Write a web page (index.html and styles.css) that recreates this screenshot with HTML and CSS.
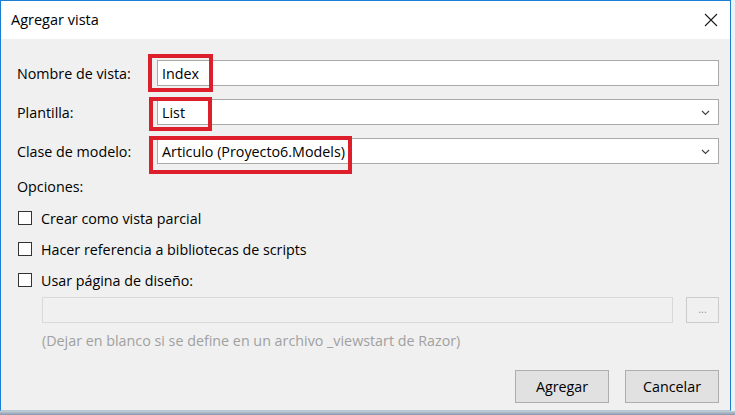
FILE: index.html
```html
<!DOCTYPE html>
<html lang="es">
<head>
<meta charset="utf-8">
<title>Agregar vista</title>
<link rel="stylesheet" href="styles.css">
</head>
<body>
<div class="screen">
  <div class="window">
    <div class="titlebar">
      <span class="title">Agregar vista</span>
      <span class="close" aria-label="Cerrar">
        <svg width="14" height="14" viewBox="0 0 14 14"><path d="M1 1 L13 13 M13 1 L1 13" stroke="#1a1a1a" stroke-width="1.1" fill="none"/></svg>
      </span>
    </div>
    <div class="body">
      <div class="field-row">
        <label class="label">Nombre de vista:</label>
        <div class="control">
          <div class="input">Index</div>
          <span class="mark mark-index"></span>
        </div>
      </div>
      <div class="field-row">
        <label class="label">Plantilla:</label>
        <div class="control">
          <div class="input select">List
            <svg class="chev" width="9" height="6" viewBox="0 0 9 6"><path d="M1 1 L4.5 4.5 L8 1" stroke="#444" stroke-width="1.2" fill="none"/></svg>
          </div>
          <span class="mark mark-list"></span>
        </div>
      </div>
      <div class="field-row">
        <label class="label">Clase de modelo:</label>
        <div class="control">
          <div class="input select">Articulo (Proyecto6.Models)
            <svg class="chev" width="9" height="6" viewBox="0 0 9 6"><path d="M1 1 L4.5 4.5 L8 1" stroke="#444" stroke-width="1.2" fill="none"/></svg>
          </div>
          <span class="mark mark-clase"></span>
        </div>
      </div>
      <div class="section">Opciones:</div>
      <div class="check-row"><span class="box"></span><span>Crear como vista parcial</span></div>
      <div class="check-row"><span class="box"></span><span>Hacer referencia a bibliotecas de scripts</span></div>
      <div class="check-row"><span class="box"></span><span>Usar página de diseño:</span></div>
      <div class="layout-row">
        <div class="input disabled"></div>
        <div class="browse">...</div>
      </div>
      <div class="hint">(Dejar en blanco si se define en un archivo _viewstart de Razor)</div>
      <div class="buttons">
        <div class="btn">Agregar</div>
        <div class="btn">Cancelar</div>
      </div>
    </div>
  </div>
  <div class="edge-right"></div>
</div>
<div class="edge-bottom"></div>
</body>
</html>
```
FILE: styles.css
```css
* { box-sizing: border-box; }
html, body { margin: 0; padding: 0; }
body {
  width: 735px;
  height: 415px;
  overflow: hidden;
  background: #dfe6ee;
  font-family: "Open Sans", "Noto Sans", sans-serif;
  font-size: 14.3px;
  color: #000;
}
.screen { display: flex; height: 411px; }
.window {
  width: 731px;
  height: 411px;
  border: 1px solid #1a7fd4;
  border-bottom-color: #b9c6d4;
  display: flex;
  flex-direction: column;
  background: #f0f0f0;
}
.edge-right { flex: 1; background: #eef2f6; }
.edge-bottom { height: 4px; background: linear-gradient(#c4cfdb, #8797aa); }
.titlebar {
  height: 38px;
  background: #fff;
  display: flex;
  align-items: center;
  justify-content: space-between;
  padding: 0 9px 0 10px;
  flex-shrink: 0;
}
.title { font-size: 14.5px; line-height: 20px; margin-top: -1px; }
.close { width: 14px; height: 14px; display: flex; margin-right: 3px; }
.body {
  flex: 1;
  padding: 21px 11px 0 16px;
  display: flex;
  flex-direction: column;
}
.field-row {
  display: flex;
  align-items: center;
  height: 26px;
  margin-bottom: 13px;
}
.label { width: 140px; flex-shrink: 0; }
.control { position: relative; flex: 1; height: 26px; }
.input {
  height: 26px;
  background: #fff;
  border: 1px solid #a9a9a9;
  display: flex;
  align-items: center;
  padding: 0 4px;
  position: relative;
}
.chev { position: absolute; right: 8px; top: 10px; }
.mark {
  position: absolute;
  border: 4px solid #dc1f2b;
}
.mark-index { left: -9px; top: -6px; width: 65px; height: 38px; }
.mark-list { left: -8px; top: -2px; width: 63px; height: 34px; }
.mark-clase { left: -8px; top: -2px; width: 203px; height: 38px; }
.section { height: 20px; line-height: 20px; margin-top: 0; }
.check-row {
  display: flex;
  align-items: center;
  height: 20px;
  margin-top: 11px;
}
.box {
  width: 14px;
  height: 14px;
  border: 1px solid #333;
  background: #fff;
  margin: 0 9px 0 1px;
}
.layout-row {
  display: flex;
  margin-top: 7px;
  padding-left: 25px;
  gap: 13px;
  height: 26px;
}
.input.disabled {
  flex: 1;
  background: #f0f0f0;
  border-color: #d9d9d9;
}
.browse {
  width: 33px;
  height: 26px;
  border: 1px solid #cccccc;
  color: #9a9a9a;
  font-size: 11px;
  display: flex;
  align-items: center;
  justify-content: center;
  padding-bottom: 3px;
}
.hint {
  color: #a0a0a0;
  padding-left: 25px;
  margin-top: 8px;
  height: 20px;
  line-height: 20px;
}
.buttons {
  display: flex;
  justify-content: flex-end;
  gap: 16px;
  margin-top: 19px;
}
.btn {
  width: 94px;
  height: 33px;
  background: #e1e1e1;
  border: 1px solid #adadad;
  display: flex;
  align-items: center;
  justify-content: center;
}
```
